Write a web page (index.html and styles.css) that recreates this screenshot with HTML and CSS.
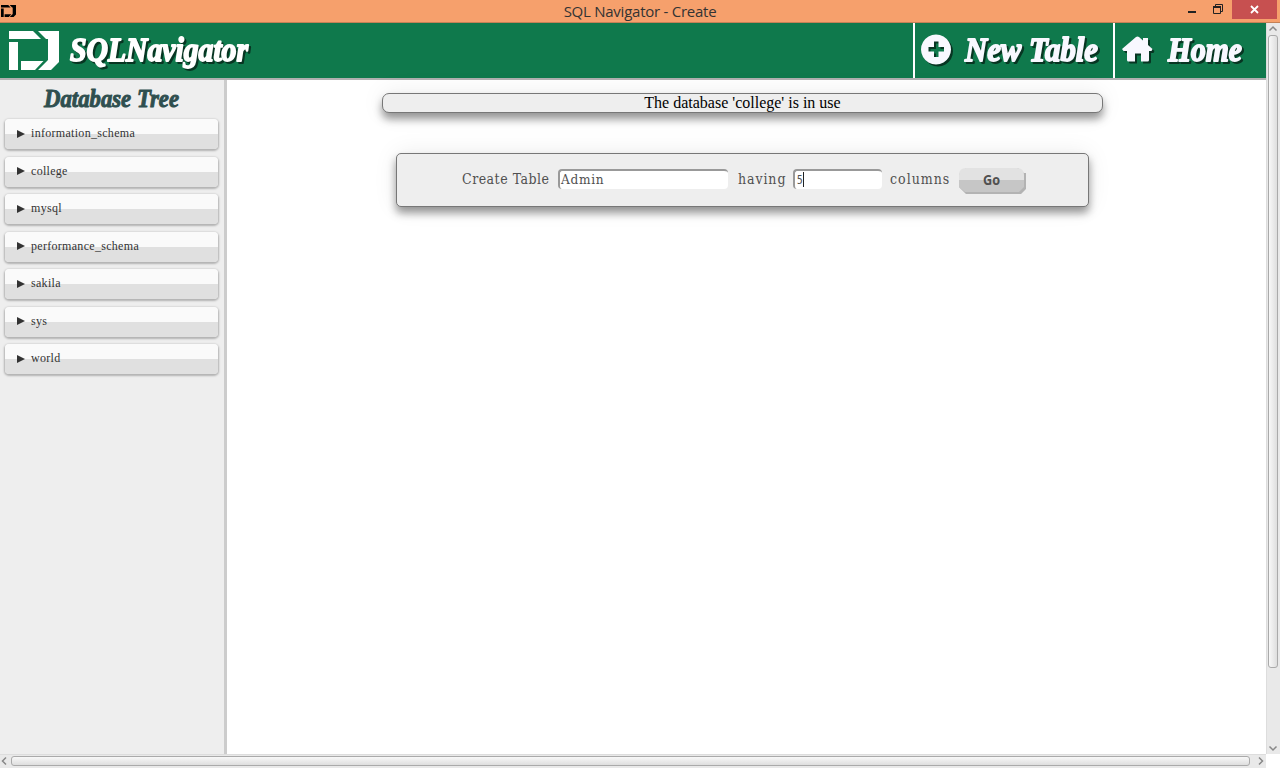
FILE: index.html
```html
<!DOCTYPE html>
<html lang="en">
<head>
<meta charset="utf-8">
<title>SQL Navigator - Create</title>
<link rel="stylesheet" href="styles.css">
</head>
<body>
<div class="titlebar">
  <svg class="app-icon" viewBox="9 31 50 39" preserveAspectRatio="none"><use href="#mark"/></svg>
  <span class="window-title">SQL Navigator - Create</span>
  <div class="controls">
    <svg width="52" height="22"><path d="M8 11h8v2H8z" fill="#222"/><path d="M33.500 6.500h7v7h-7zM35.500 6v-1.500h7v7H41" fill="none" stroke="#222"/><path d="M33 6h8v2h-8z" fill="#222"/></svg>
    <div class="close"><svg width="9" height="9" viewBox="0 0 9 9"><path d="M1 1l7 7M8 1L1 8" stroke="#fff" stroke-width="1.800"/></svg></div>
  </div>
</div>
<div class="window">
  <div class="page">
    <header class="header">
      <svg class="brand" width="270" height="55" viewBox="0 23 270 55">
        <g id="mark"><path d="M9 31h24l8 8H9zM9 42h9v28H9zM38 31h21v31l-8 8H38l10-10V39h-2zM21 61h22.500L35 70H21z"/></g>
        <text class="script" x="70" y="61" font-size="33" textLength="178" lengthAdjust="spacingAndGlyphs">SQLNavigator</text>
      </svg>
      <nav class="nav">
        <a class="nav-item nav-new"><svg width="198" height="55" viewBox="915 23 198 55">
          <path class="glyph" fill-rule="evenodd" d="M936 34.500a15 15 0 1 0 .01 0zM934 41.500h4.500v5.500h5.500v4.500h-5.500v5.500H934v-5.500h-5.500V47h5.500z"/>
          <text class="script" x="965" y="61" font-size="34" textLength="133" lengthAdjust="spacingAndGlyphs">New Table</text></svg></a>
        <a class="nav-item nav-home"><svg width="151" height="55" viewBox="1115 23 151 55">
          <path class="glyph" d="M1122 49l14-12q1.500-1 3 0l4 3.500V38h5v7l4.500 4-1 2H1149v9q0 1.500-1.500 1.500H1141v-8h-6v8h-6.500q-1.500 0-1.500-1.500v-9h-3.500z"/>
          <text class="script" x="1168" y="61" font-size="34" textLength="74" lengthAdjust="spacingAndGlyphs">Home</text></svg></a>
      </nav>
    </header>
    <div class="content">
      <aside class="sidebar">
        <svg class="tree-title" width="224" height="39"><text x="44" y="27" font-size="26" textLength="135" lengthAdjust="spacingAndGlyphs">Database Tree</text></svg>
        <ul class="tree">
          <li><i></i><span>information_schema</span></li>
          <li><i></i><span>college</span></li>
          <li><i></i><span>mysql</span></li>
          <li><i></i><span>performance_schema</span></li>
          <li><i></i><span>sakila</span></li>
          <li><i></i><span>sys</span></li>
          <li><i></i><span>world</span></li>
        </ul>
      </aside>
      <main class="main">
        <div class="message">The database 'college' is in use</div>
        <div class="create">
          <span class="label label-create">Create Table</span>
          <div class="field name">Admin</div>
          <span class="label label-having">having</span>
          <div class="field count">5<b></b></div>
          <span class="label label-columns">columns</span>
          <svg class="go" width="67" height="26"><path d="M7 0h52l6 5h2v16l-5 5H7l-7-7V6z" fill="#b3b3b3"/><path d="M7 0h51q7 0 7 7v5H0V7q0-7 7-7z" fill="#e2e2e2"/><path d="M0 12h65v7l-5 5H6l-6-5z" fill="#c6c6c6"/><text x="24" y="17" textLength="17" lengthAdjust="spacingAndGlyphs">Go</text></svg>
        </div>
      </main>
    </div>
  </div>
  <div class="vbar">
    <svg width="14" height="12"><path d="M3.500 7.500L7 4l3.500 3.500" class="arrow"/></svg>
    <div class="vthumb"></div>
    <svg width="14" height="12"><path d="M3.500 4.500L7 8l3.500-3.500" class="arrow"/></svg>
  </div>
  <div class="hbar">
    <svg width="11" height="14"><path d="M6 3.500L2.500 7L6 10.500" class="arrow"/></svg>
    <div class="hthumb"></div>
    <svg width="11" height="14"><path d="M4 3.500L7.500 7L4 10.500" class="arrow"/></svg>
  </div>
  <div class="corner"></div>
</div>
</body>
</html>
```
FILE: styles.css
```css
* { box-sizing: border-box; }
body { margin: 0; width: 1280px; height: 768px; overflow: hidden; background: #fff; font-family: "Liberation Serif", serif; }
svg { display: block; }
.titlebar { height: 23px; background: #f6a06c; border-bottom: 1px solid #c48157; display: grid; grid-template-columns: 101px 1fr 101px; }
.app-icon { width: 15px; height: 12px; margin: 5px 0 0 1px; }
.window-title { font: 15px/23px "Open Sans", sans-serif; letter-spacing: -0.250px; color: #333; text-align: center; }
.controls { display: flex; justify-content: flex-end; padding-right: 3px; }
.close { width: 45px; height: 19px; background: #c75050; display: flex; align-items: center; justify-content: center; }
.window { height: 745px; display: grid; grid-template-columns: 1266px 14px; grid-template-rows: 731px 14px; }
.page { display: flex; flex-direction: column; }
.header { height: 57px; background: #0f794c; border-bottom: 2px solid #b0b0b0; display: flex; justify-content: space-between; }
.header svg { overflow: visible; }
.nav { display: flex; }
.nav-item { border-left: 2px solid #fff; display: block; }
.nav-new { width: 200px; }
.nav-home { width: 153px; }
.script { font-family: "Liberation Serif", serif; font-weight: bold; font-style: italic; stroke: currentColor; stroke-width: 1.800px; stroke-linejoin: round; }
.brand { color: #fff; fill: #fff; }
.nav-item { color: #f8f8ff; fill: #f8f8ff; }
.script, .glyph { filter: drop-shadow(2px 2px 0 #073522); }
.content { flex: 1; display: flex; }
.sidebar { width: 227px; background: #eee; border-right: 3px solid #ccc; }
.tree-title { fill: #2f4f4f; stroke: #2f4f4f; stroke-width: 1px; stroke-linejoin: round; font-family: "Liberation Serif", serif; font-weight: bold; font-style: italic; }
.tree { list-style: none; margin: 0; padding: 0 6px 0 5px; display: flex; flex-direction: column; gap: 7.500px; }
.tree li { height: 30px; border-radius: 4px; background: linear-gradient(#fafafa 50%, #e0e0e0 50%); box-shadow: 0 1px 2px 1px rgba(0,0,0,.25); display: flex; align-items: center; padding: 0 0 1px 12px; gap: 7px; font-size: 12px; color: #333; letter-spacing: .300px; }
.tree i { border-left: 8px solid #333; border-top: 4px solid transparent; border-bottom: 4px solid transparent; margin-right: -1px; }
.main { flex: 1; display: flex; flex-direction: column; align-items: center; padding: 13px 8px 0 0; }
.message { width: 721px; height: 20px; border: 1px solid #777; border-radius: 7px; background: #eee; box-shadow: 0 6px 9px rgba(0,0,0,.4), 0 0 24px rgba(0,0,0,.08); text-align: center; font-size: 16px; line-height: 18px; }
.create { width: 693px; height: 54px; margin-top: 40px; border: 1px solid #777; border-radius: 5px; background: #eee; box-shadow: 0 6px 9px rgba(0,0,0,.4), 0 0 24px rgba(0,0,0,.08); display: flex; align-items: flex-start; padding: 15px 0 0 65px; font-family: "DejaVu Serif Condensed", "DejaVu Serif", serif; font-stretch: condensed; font-size: 14px; color: #505050; }
.label { line-height: 20px; white-space: nowrap; letter-spacing: .500px; }
.label-create { width: 96px; }
.label-having { width: 55px; letter-spacing: .900px; }
.label-columns { width: 69px; letter-spacing: 1px; }
.field { height: 20px; background: #fff; border-radius: 4px; border-top: 2px solid #999; border-left: 2px solid #999; border-right: 0 solid #fff; line-height: 17px; padding-left: 1px; display: flex; font-size: 13.500px; letter-spacing: .700px; }
.name { width: 170px; margin-right: 10px; }
.count { width: 89px; margin-right: 8px; padding-left: 2px; font-family: "Open Sans", sans-serif; font-size: 13px; letter-spacing: 0; }
.count b { width: 1px; height: 15px; margin-top: 1px; background: #222; }
.go { margin-top: -1px; font: bold 14px "Open Sans", sans-serif; fill: #505050; }
.vbar { background: #e9e9e9; border-left: 1px solid #ddd; display: flex; flex-direction: column; }
.vbar svg { margin-left: -1px; }
.vthumb { width: 10px; height: 633px; margin: 0 1px 74px; border: 1px solid #aaa; border-radius: 3px; background: linear-gradient(90deg, #f8f8f8, #dedede); }
.hbar { background: #e9e9e9; border-top: 1px solid #ddd; display: flex; }
.hbar svg { margin-top: -1px; }
.hthumb { width: 1239px; height: 10px; margin: 1px 5px 0 0; border: 1px solid #aaa; border-radius: 3px; background: linear-gradient(#f8f8f8, #dedede); }
.corner { background: #fff; }
.arrow { fill: none; stroke: #888; stroke-width: 1.500; }
```
